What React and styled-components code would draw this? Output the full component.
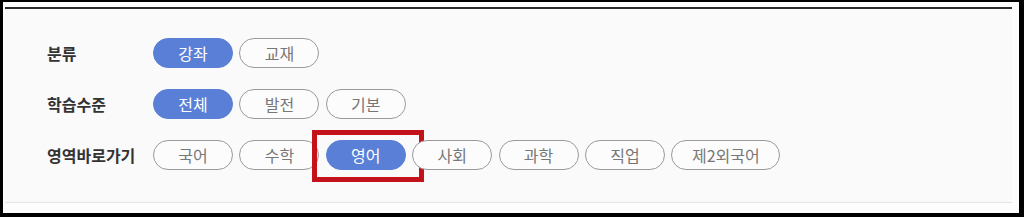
import styled, { createGlobalStyle } from "styled-components";

const GlobalStyle = createGlobalStyle`
  html, body {
    margin: 0;
    padding: 0;
    background: #000;
  }
  body {
    font-family: "Noto Sans CJK KR", "Noto Sans", sans-serif;
  }
`;

const rows = [
  { label: "분류", items: ["강좌", "교재"], active: "강좌" },
  { label: "학습수준", items: ["전체", "발전", "기본"], active: "전체" },
  {
    label: "영역바로가기",
    items: ["국어", "수학", "영어", "사회", "과학", "직업", "제2외국어"],
    active: "영어",
    marked: "영어",
  },
];

const App = () => (
  <>
    <GlobalStyle />
    <Frame>
      <Panel>
        {rows.map((row) => (
          <FilterRow key={row.label}>
            <Label>{row.label}</Label>
            <Pills>
              {row.items.map((item) => (
                <Pill
                  key={item}
                  $active={item === row.active}
                  $wide={item.length > 3}
                  $marked={item === row.marked}
                >
                  {item}
                </Pill>
              ))}
            </Pills>
          </FilterRow>
        ))}
      </Panel>
    </Frame>
  </>
);

export default App;

const Frame = styled.div`
  box-sizing: border-box;
  width: 1024px;
  height: 217px;
  border-style: solid;
  border-color: #000;
  border-width: 2px 5px 4px 3px;
  background: #fdfdfd;
  padding: 5px 7px 10px 2px;
`;

const Panel = styled.div`
  box-sizing: border-box;
  height: 100%;
  background: #fafafa;
  border-top: 2px solid #2a2a2a;
  border-bottom: 1px solid #e4e4e4;
  padding: 29px 0 0 42px;
  display: flex;
  flex-direction: column;
  gap: 21px;
`;

const FilterRow = styled.div`
  display: flex;
  align-items: center;
  height: 30px;
`;

const Label = styled.div`
  width: 106px;
  flex-shrink: 0;
  font-size: 16px;
  font-weight: 700;
  color: #333;
`;

const Pills = styled.div`
  display: flex;
  gap: 6.4px;
`;

const Pill = styled.div`
  position: relative;
  box-sizing: border-box;
  width: ${(p) => (p.$wide ? "109px" : "80px")};
  height: 30px;
  border-radius: 15px;
  display: flex;
  align-items: center;
  justify-content: center;
  font-size: 16px;
  color: ${(p) => (p.$active ? "#fff" : "#777")};
  background: ${(p) => (p.$active ? "#5a7fd6" : "#fcfcfc")};
  border: 1px solid ${(p) => (p.$active ? "#5a7fd6" : "#9a9a9a")};

  ${(p) =>
    p.$marked &&
    `
    &::after {
      content: "";
      position: absolute;
      top: -11px;
      bottom: -13px;
      left: -15px;
      right: -19px;
      border: 5px solid #c4121a;
    }
  `}
`;
